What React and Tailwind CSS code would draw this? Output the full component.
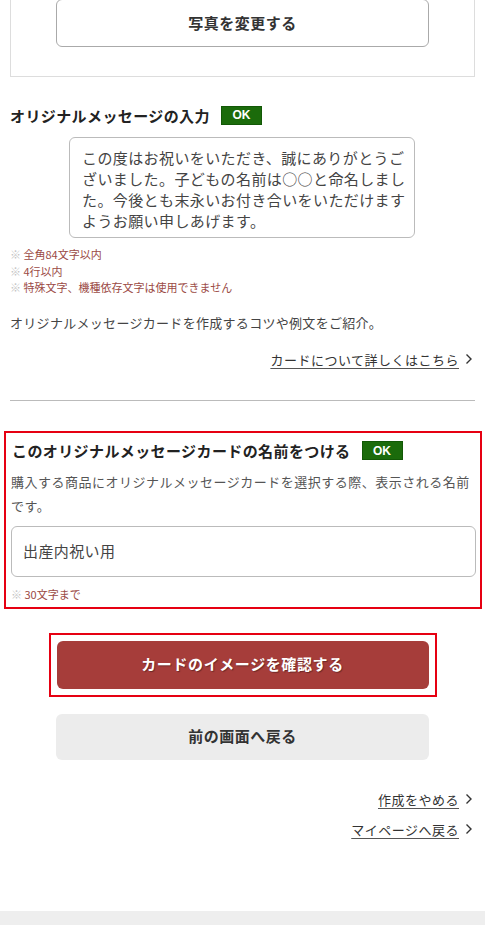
const FONT = { fontFamily: '"Noto Sans CJK JP", "Noto Sans", sans-serif' };

function Chevron() {
  return (
    <svg width="8" height="12" viewBox="0 0 8 12" className="ml-[6px] shrink-0">
      <polyline points="1.5,1.5 6,6 1.5,10.5" fill="none" stroke="#333" strokeWidth="1.4" />
    </svg>
  );
}

function OkBadge() {
  return (
    <span
      className="inline-flex items-center justify-center w-[41px] h-[19px] bg-[#1b6b0b] border border-[#125806] text-white text-[12px] font-bold leading-none"
      style={{ fontFamily: '"Liberation Sans", Arial, sans-serif' }}
    >
      OK
    </span>
  );
}

function TextLink({ children }) {
  return (
    <div className="flex items-center justify-end pr-[2px]">
      <a className="text-[13px] tracking-[0.5px] text-[#333] underline underline-offset-[3px] decoration-[#555] leading-none">
        {children}
      </a>
      <Chevron />
    </div>
  );
}

const MESSAGE = [
  'この度はお祝いをいただき、誠にありがとうご',
  'ざいました。子どもの名前は○○と命名しまし',
  'た。今後とも末永いお付き合いをいただけます',
  'ようお願い申しあげます。',
];

export default function App() {
  return (
    <div className="w-[485px] min-h-[925px] bg-white text-[#333] overflow-hidden flex flex-col" style={FONT}>
      <div className="px-[10px]">
        {/* photo box (top cut off) */}
        <div className="-mt-[20px] border border-[#ddd] pt-[18px] pb-[29px] flex justify-center">
          <button className="w-[373px] h-[48px] border border-[#aaa] rounded-[6px] bg-white text-[15px] font-bold tracking-[0.5px] text-[#333]">
            写真を変更する
          </button>
        </div>

        {/* message input */}
        <div className="mt-[28px] flex items-center gap-[11px] h-[20px]">
          <h2 className="text-[15px] font-bold tracking-[0.4px] text-[#222] leading-none">オリジナルメッセージの入力</h2>
          <OkBadge />
        </div>
        <div className="mt-[12px] ml-[59px] w-[346px] h-[101px] border border-[#bbb] rounded-[6px] pl-[12px] pt-[9px]">
          {MESSAGE.map((l) => (
            <div key={l} className="whitespace-nowrap text-[15px] leading-[21px] tracking-[0.4px] text-[#444]">{l}</div>
          ))}
        </div>
        <ul className="mt-[8px] text-[11px] leading-[16.5px] text-[#9b4a45]">
          <li><span className="text-[#c4c4c4]">※</span> 全角84文字以内</li>
          <li><span className="text-[#c4c4c4]">※</span> 4行以内</li>
          <li><span className="text-[#c4c4c4]">※</span> 特殊文字、機種依存文字は使用できません</li>
        </ul>

        <p className="mt-[17px] text-[13px] tracking-[0.3px] leading-[20px] text-[#444]">
          オリジナルメッセージカードを作成するコツや例文をご紹介。
        </p>
        <div className="mt-[20px]">
          <TextLink>カードについて詳しくはこちら</TextLink>
        </div>

        <div className="mt-[34px] h-px bg-[#bbb]" />
      </div>

      {/* card name */}
      <div className="mt-[30px] mx-[4px] w-[478px] border-2 border-[#e60012] pl-[5px] pr-[4px] pt-[8px] pb-[5px]">
        <div className="flex items-center gap-[11px] h-[20px] ml-[1px]">
          <h2 className="text-[15px] font-bold tracking-[0.4px] text-[#222] leading-none">このオリジナルメッセージカードの名前をつける</h2>
          <OkBadge />
        </div>
        <p className="mt-[9px] text-[13px] leading-[24px] tracking-[0.5px] text-[#555]">
          <span className="whitespace-nowrap">購入する商品にオリジナルメッセージカードを選択する際、表示される名前</span>
          <br />
          です。
        </p>
        <div className="mt-[8px] h-[51px] border border-[#bbb] rounded-[6px] flex items-center pl-[11px] text-[15px] tracking-[0.4px] text-[#444]">
          出産内祝い用
        </div>
        <p className="mt-[9px] text-[11px] leading-[16px] text-[#9b4a45]">
          <span className="text-[#c4c4c4]">※</span> 30文字まで
        </p>
      </div>

      {/* buttons */}
      <div className="mt-[24px] mx-auto w-[388px] border-2 border-[#e60012] p-[6px]">
        <button
          className="w-full h-[48px] bg-[#a63d3a] rounded-[6px] text-white text-[15px] font-bold tracking-[0.6px]"
          style={{ textShadow: '1px 1px 1px rgba(0,0,0,0.35)' }}
        >
          カードのイメージを確認する
        </button>
      </div>
      <div className="mt-[17px] flex justify-center">
        <button className="w-[373px] h-[46px] bg-[#ececec] rounded-[6px] text-[15px] font-bold tracking-[0.5px] text-[#333]">
          前の画面へ戻る
        </button>
      </div>

      <div className="mt-[33px] flex flex-col gap-[17px] px-[10px]">
        <TextLink>作成をやめる</TextLink>
        <TextLink>マイページへ戻る</TextLink>
      </div>

      <div className="flex-1" />
      <div className="h-[14px] bg-[#eeeeee]" />
    </div>
  );
}
